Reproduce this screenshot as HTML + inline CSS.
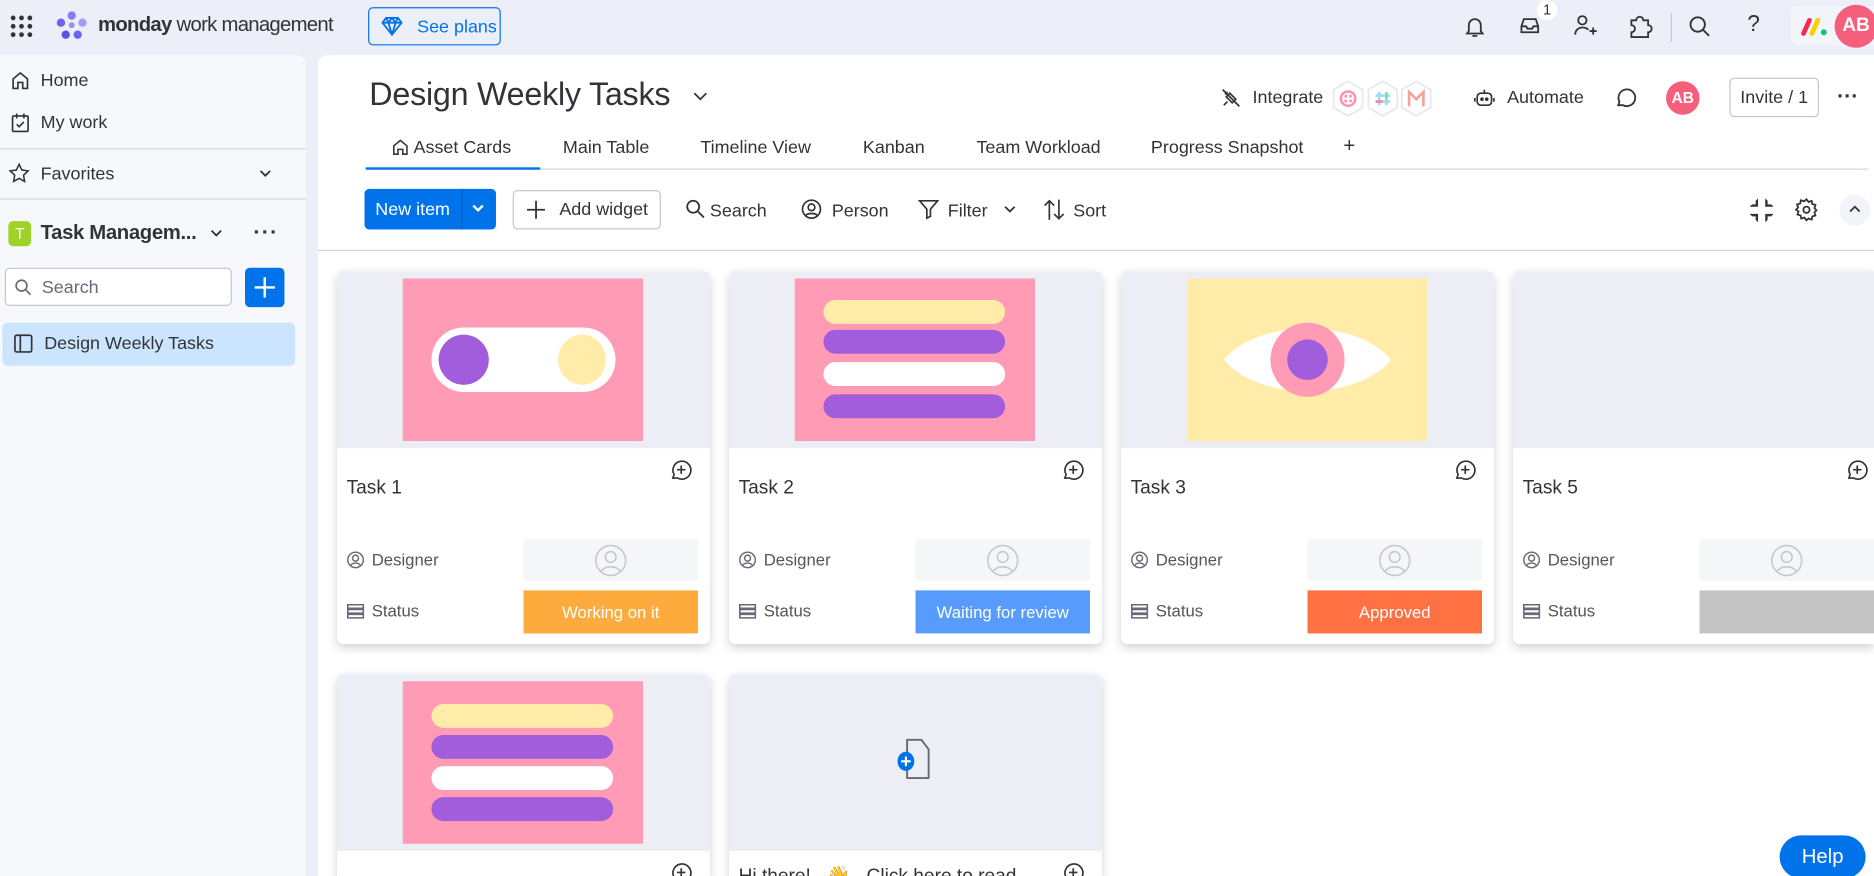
<!DOCTYPE html>
<html><head><meta charset="utf-8">
<style>
*{box-sizing:border-box;margin:0;padding:0}
html,body{width:1874px;height:876px;overflow:hidden;background:#eceff8;font-family:"Liberation Sans",sans-serif;color:#323338}
#w{position:absolute;left:0;top:0;width:1568px;height:733px;transform:scale(1.19515);transform-origin:0 0;background:#eceff8;overflow:hidden}
.a{position:absolute}
.t{font-size:14px;white-space:nowrap}
.card{position:absolute;width:312px;height:312px;background:#fff;border-radius:6px;box-shadow:0 3px 8px rgba(0,0,0,.18);overflow:hidden}
.img{position:absolute;left:0;top:0;width:312px;height:148px;background:#ecedf5}
.pink{position:absolute;left:55px;top:6px;width:201px;height:136px;background:#ff9bb4}
.bar{position:absolute;left:24px;width:152px;height:20px;border-radius:10px}
.cm{position:absolute;left:278px;top:156px}
.title{position:absolute;left:8px;top:173px;font-size:16px}
.lbl{position:absolute;left:8px;font-size:14px;color:#555;display:flex;align-items:center;gap:6px}
.box{position:absolute;left:156px;width:146px}
.st{color:#fff;font-size:14px;display:flex;align-items:center;justify-content:center}
</style></head><body><div id="w">

<svg class="a" style="left:8px;top:12px" width="20" height="20" viewBox="0 0 20 20" fill="#323338"><circle cx="3" cy="3" r="2"/><circle cx="10" cy="3" r="2"/><circle cx="17" cy="3" r="2"/><circle cx="3" cy="10" r="2"/><circle cx="10" cy="10" r="2"/><circle cx="17" cy="10" r="2"/><circle cx="3" cy="17" r="2"/><circle cx="10" cy="17" r="2"/><circle cx="17" cy="17" r="2"/></svg>
<svg class="a" style="left:46px;top:8px" width="28" height="28" viewBox="0 0 28 28"><circle cx="14" cy="5" r="3.5" fill="#8a7cf0"/><circle cx="5" cy="11" r="3.5" fill="#6e63ee"/><circle cx="23" cy="11" r="3.5" fill="#a79cf5"/><circle cx="9" cy="21" r="3.5" fill="#5b52e8"/><circle cx="19" cy="21" r="3.5" fill="#6e63ee"/><circle cx="14" cy="13" r="2.5" fill="#9a90f2"/></svg>
<div class="a" style="left:82px;top:11px;font-size:17px;letter-spacing:-.6px"><b>monday</b> work management</div>
<div class="a" style="left:308px;top:6px;width:111px;height:32px;border:1px solid #0073ea;border-radius:4px;color:#0073ea;font-size:15px;display:flex;align-items:center;padding-left:10px;gap:12px;background:#eceff8">
<svg width="18" height="16" viewBox="0 0 18 16" fill="none" stroke="#0073ea" stroke-width="1.5"><path d="M4 1h10l3 4-8 10L1 5z M1 5h16 M6 5l3 10 3-10 M4 1l2 4 3-4 3 4 2-4"/></svg>See plans</div>
<svg class="a" style="left:1224px;top:12px" width="20" height="20" viewBox="0 0 20 20" fill="none" stroke="#323338" stroke-width="1.5"><path d="M5 14V9a5 5 0 0110 0v5l1.5 2h-13z M8 18h4"/></svg>
<svg class="a" style="left:1270px;top:12px" width="20" height="20" viewBox="0 0 20 20" fill="none" stroke="#323338" stroke-width="1.5"><path d="M3 10l2-6h10l2 6v5H3z M3 10h4l1 2h4l1-2h4"/></svg>
<div class="a" style="left:1286px;top:0;width:17px;height:17px;border-radius:50%;background:#fff;font-size:12px;text-align:center;line-height:17px">1</div>
<svg class="a" style="left:1315px;top:11px" width="22" height="22" viewBox="0 0 22 22" fill="none" stroke="#323338" stroke-width="1.5"><circle cx="9" cy="6" r="3.5"/><path d="M3 18c0-4 3-6 6-6s4 1 5 2 M15 15h6 M18 12v6"/></svg>
<svg class="a" style="left:1361px;top:11px" width="22" height="22" viewBox="0 0 22 22" fill="none" stroke="#323338" stroke-width="1.5"><path d="M4 6h4a3 3 0 016 0h4v4a3 3 0 010 6v4H4v-4a3 3 0 000-6z"/></svg>
<div class="a" style="left:1398px;top:11px;width:1px;height:24px;background:#c3c6d4"></div>
<svg class="a" style="left:1412px;top:12px" width="20" height="20" viewBox="0 0 20 20" fill="none" stroke="#323338" stroke-width="1.6"><circle cx="8.5" cy="8.5" r="6"/><path d="M13 13l5 5"/></svg>
<div class="a" style="left:1462px;top:10px;font-size:19px">?</div>
<div class="a" style="left:1499px;top:5px;width:69px;height:33px;background:#f3f5fb;border-radius:4px 0 0 4px"></div>
<svg class="a" style="left:1506px;top:13px" width="24" height="18" viewBox="0 0 24 18"><path d="M3 15l5-11" stroke="#f62b54" stroke-width="4" stroke-linecap="round"/><path d="M10 15l5-11" stroke="#ffcc00" stroke-width="4" stroke-linecap="round"/><circle cx="20" cy="14" r="2.5" fill="#00ca72"/></svg>
<div class="a" style="left:1535px;top:4px;width:36px;height:36px;border-radius:50%;background:#f65f7c;color:#fff;font-weight:bold;font-size:16px;text-align:center;line-height:36px">AB</div>

<div class="a" style="left:0;top:46px;width:256px;height:687px;background:#f7f8fc;border-radius:0 8px 0 0"></div>
<svg class="a" style="left:9px;top:59px" width="16" height="16" viewBox="0 0 16 16" fill="none" stroke="#323338" stroke-width="1.4"><path d="M2 7l6-5 6 5v8h-4v-5H6v5H2z"/></svg>
<div class="a t" style="left:34px;top:59px;font-size:15px">Home</div>
<svg class="a" style="left:9px;top:94px" width="16" height="17" viewBox="0 0 16 17" fill="none" stroke="#323338" stroke-width="1.4"><rect x="1.5" y="3" width="13" height="13" rx="1"/><path d="M5 1v4 M11 1v4 M5 10l2 2 4-4"/></svg>
<div class="a t" style="left:34px;top:94px;font-size:15px">My work</div>
<div class="a" style="left:0;top:124px;width:256px;height:1px;background:#d0d4e4"></div>
<svg class="a" style="left:7px;top:136px" width="18" height="18" viewBox="0 0 18 18" fill="none" stroke="#323338" stroke-width="1.3"><path d="M9 1.5l2.3 4.8 5.2.7-3.8 3.6.9 5.2L9 13.3 4.4 15.8l.9-5.2L1.5 7l5.2-.7z"/></svg>
<div class="a t" style="left:34px;top:137px;font-size:15px">Favorites</div>
<svg class="a" style="left:216px;top:140px" width="12" height="10" viewBox="0 0 12 10" fill="none" stroke="#323338" stroke-width="1.5"><path d="M2 3l4 4 4-4"/></svg>
<div class="a" style="left:0;top:166px;width:256px;height:1px;background:#d0d4e4"></div>
<div class="a" style="left:7px;top:185px;width:19px;height:21px;border-radius:4px;background:#9cd326;color:#fff;font-size:13px;text-align:center;line-height:21px">T</div>
<div class="a t" style="left:34px;top:185px;font-size:17px;font-weight:bold;letter-spacing:-.3px">Task Managem...</div>
<svg class="a" style="left:175px;top:190px" width="12" height="10" viewBox="0 0 12 10" fill="none" stroke="#323338" stroke-width="1.5"><path d="M2 3l4 4 4-4"/></svg>
<div class="a" style="left:212px;top:184px;font-size:18px;font-weight:bold;letter-spacing:1px">···</div>
<div class="a" style="left:4px;top:224px;width:190px;height:32px;border:1px solid #c3c6d4;border-radius:4px;background:#fff"></div>
<svg class="a" style="left:12px;top:233px" width="15" height="15" viewBox="0 0 15 15" fill="none" stroke="#676879" stroke-width="1.4"><circle cx="6" cy="6" r="4.5"/><path d="M9.5 9.5l4 4"/></svg>
<div class="a t" style="left:35px;top:232px;color:#676879;font-size:15px">Search</div>
<div class="a" style="left:205px;top:224px;width:33px;height:33px;border-radius:4px;background:#0073ea"></div>
<svg class="a" style="left:211px;top:230px" width="21" height="21" viewBox="0 0 21 21" stroke="#fff" stroke-width="2"><path d="M10.5 2v17 M2 10.5h17"/></svg>
<div class="a" style="left:2px;top:270px;width:245px;height:36px;border-radius:4px;background:#cce5ff"></div>
<svg class="a" style="left:11px;top:279px" width="17" height="17" viewBox="0 0 17 17" fill="none" stroke="#323338" stroke-width="1.4"><rect x="1.5" y="1.5" width="14" height="14" rx="1.5"/><path d="M6 1.5v14"/></svg>
<div class="a t" style="left:37px;top:279px;font-size:15px">Design Weekly Tasks</div>

<div class="a" style="left:266px;top:46px;width:1302px;height:687px;background:#fff;border-radius:8px 0 0 0"></div>
<div class="a t" style="left:309px;top:64px;font-size:27px;letter-spacing:-.2px">Design Weekly Tasks</div>
<svg class="a" style="left:579px;top:76px" width="14" height="10" viewBox="0 0 14 10" fill="none" stroke="#323338" stroke-width="1.5"><path d="M2 2l5 5 5-5"/></svg>
<svg class="a" style="left:1021px;top:73px" width="18" height="18" viewBox="0 0 18 18" fill="none" stroke="#323338" stroke-width="1.4"><path d="M2 2l14 14 M6 4l-2 2 M5 8l5 5 3-3-5-5z M12 12l4 4 M3 15l3-3"/></svg>
<div class="a t" style="left:1048px;top:73px;font-size:15px">Integrate</div>
<svg class="a" style="left:1113px;top:66px" width="90" height="34" viewBox="0 0 90 34"><g fill="#fff" stroke="#e6e9f2" stroke-width="1.5"><path d="M15 2l12 7v15l-12 7-12-7V9z"/><path d="M44 2l12 7v15l-12 7-12-7V9z"/><path d="M72 2l12 7v15l-12 7-12-7V9z"/></g><circle cx="15" cy="16.5" r="6" fill="none" stroke="#ff8fa6" stroke-width="2"/><circle cx="13" cy="14.5" r="1.2" fill="#ff8fa6"/><circle cx="17" cy="14.5" r="1.2" fill="#ff8fa6"/><circle cx="13" cy="18.5" r="1.2" fill="#ff8fa6"/><circle cx="17" cy="18.5" r="1.2" fill="#ff8fa6"/><path d="M41 11v11 M47 11v11 M38 14h12 M38 19h12" stroke-width="2.2" stroke="#9adcf5"/><path d="M47 11v6" stroke="#8fd6b4" stroke-width="2.2"/><path d="M38 19h6" stroke="#f08aa8" stroke-width="2.2"/><path d="M66 23V11l6 6 6-6v12" fill="none" stroke="#f2a29a" stroke-width="2.2"/></svg>
<svg class="a" style="left:1233px;top:73px" width="18" height="18" viewBox="0 0 18 18" fill="none" stroke="#323338" stroke-width="1.4"><rect x="3" y="5" width="12" height="10" rx="3"/><path d="M9 2v3 M1 9v3 M17 9v3"/><circle cx="7" cy="10" r=".8" fill="#323338"/><circle cx="11" cy="10" r=".8" fill="#323338"/></svg>
<div class="a t" style="left:1261px;top:73px;font-size:15px">Automate</div>
<svg class="a" style="left:1350px;top:72px" width="20" height="20" viewBox="0 0 20 20" fill="none" stroke="#323338" stroke-width="1.5"><path d="M4 16l1-3a7 7 0 113 3z"/></svg>
<div class="a" style="left:1394px;top:68px;width:28px;height:28px;border-radius:50%;background:#f65f7c;color:#fff;font-weight:bold;font-size:13px;text-align:center;line-height:28px">AB</div>
<div class="a" style="left:1447px;top:65px;width:75px;height:33px;border:1px solid #c3c6d4;border-radius:4px;font-size:15px;text-align:center;line-height:31px">Invite / 1</div>
<div class="a" style="left:1537px;top:70px;font-size:18px;font-weight:bold">···</div>

<svg class="a" style="left:328px;top:116px" width="14" height="14" viewBox="0 0 14 14" fill="none" stroke="#323338" stroke-width="1.3"><path d="M1.5 6l5.5-4.5 5.5 4.5v7h-3.5v-4h-4v4h-3.5z"/></svg>
<div class="a t" style="left:346px;top:115px;font-size:15px">Asset Cards</div>
<div class="a t" style="left:471px;top:115px;font-size:15px">Main Table</div>
<div class="a t" style="left:586px;top:115px;font-size:15px">Timeline View</div>
<div class="a t" style="left:722px;top:115px;font-size:15px">Kanban</div>
<div class="a t" style="left:817px;top:115px;font-size:15px">Team Workload</div>
<div class="a t" style="left:963px;top:115px;font-size:15px">Progress Snapshot</div>
<div class="a t" style="left:1124px;top:112px;font-size:17px">+</div>
<div class="a" style="left:306px;top:141px;width:1257px;height:1px;background:#d0d4e4"></div>
<div class="a" style="left:306px;top:140px;width:146px;height:2px;background:#0073ea"></div>

<div class="a" style="left:305px;top:158px;width:110px;height:34px;border-radius:4px;background:#0073ea"></div>
<div class="a t" style="left:314px;top:167px;color:#fff;font-size:15px">New item</div>
<div class="a" style="left:386px;top:158px;width:1px;height:34px;background:#0060c0"></div>
<svg class="a" style="left:394px;top:170px" width="12" height="10" viewBox="0 0 12 10" fill="none" stroke="#fff" stroke-width="2"><path d="M2 2l4 4 4-4"/></svg>
<div class="a" style="left:429px;top:159px;width:124px;height:33px;border:1px solid #c3c6d4;border-radius:4px"></div>
<svg class="a" style="left:440px;top:167px" width="17" height="17" viewBox="0 0 17 17" stroke="#323338" stroke-width="1.5"><path d="M8.5 1v15 M1 8.5h15"/></svg>
<div class="a t" style="left:468px;top:167px;font-size:15px">Add widget</div>
<svg class="a" style="left:573px;top:166px" width="17" height="17" viewBox="0 0 17 17" fill="none" stroke="#323338" stroke-width="1.5"><circle cx="7" cy="7" r="5"/><path d="M11 11l5 5"/></svg>
<div class="a t" style="left:594px;top:168px;font-size:15px">Search</div>
<svg class="a" style="left:670px;top:166px" width="18" height="18" viewBox="0 0 18 18" fill="none" stroke="#323338" stroke-width="1.4"><circle cx="9" cy="9" r="7.5"/><circle cx="9" cy="7.5" r="2.8"/><path d="M4 14.5c1.5-2.5 8.5-2.5 10 0"/></svg>
<div class="a t" style="left:696px;top:168px;font-size:15px">Person</div>
<svg class="a" style="left:768px;top:166px" width="18" height="18" viewBox="0 0 18 18" fill="none" stroke="#323338" stroke-width="1.4"><path d="M1.5 2h15l-6 7v6l-3 1.5V9z"/></svg>
<div class="a t" style="left:793px;top:168px;font-size:15px">Filter</div>
<svg class="a" style="left:839px;top:171px" width="12" height="10" viewBox="0 0 12 10" fill="none" stroke="#323338" stroke-width="1.5"><path d="M2 2l4 4 4-4"/></svg>
<svg class="a" style="left:873px;top:166px" width="18" height="19" viewBox="0 0 18 19" fill="none" stroke="#323338" stroke-width="1.4"><path d="M5 18V2 M1 6l4-4 4 4 M13 1v16 M9 13l4 4 4-4"/></svg>
<div class="a t" style="left:898px;top:168px;font-size:15px">Sort</div>
<svg class="a" style="left:1463px;top:165px" width="22" height="22" viewBox="0 0 22 22" fill="#323338"><path d="M8 1v7H1l2-2 3 0V3zM14 1v7h7l-2-2h-3V3zM8 21v-7H1l2 2h3v3zM14 21v-7h7l-2 2h-3v3z"/></svg>
<svg class="a" style="left:1501px;top:165px" width="21" height="21" viewBox="0 0 24 24" fill="none" stroke="#323338" stroke-width="1.7"><circle cx="12" cy="12" r="3"/><path d="M12 2l2 2.5 3-1 .6 3 3 .9-1 3 2 2.1-2 2 1 3-3 .9-.6 3-3-1L12 22l-2-2.5-3 1-.6-3-3-.9 1-3L2 12l2-2.1-1-3 3-.9.6-3 3 1z"/></svg>
<div class="a" style="left:1539px;top:163px;width:26px;height:26px;border-radius:50%;background:#f3f4f9"></div>
<svg class="a" style="left:1547px;top:171px" width="10" height="8" viewBox="0 0 10 8" fill="none" stroke="#323338" stroke-width="1.5"><path d="M1 6l4-4 4 4"/></svg>
<div class="a" style="left:266px;top:209px;width:1302px;height:1px;background:#d0d4e4"></div>

<div class="card" style="left:282px;top:227px">
 <div class="img"><div class="pink">
  <div class="a" style="left:24px;top:41px;width:154px;height:54px;border-radius:27px;background:#fff"></div>
  <div class="a" style="left:30px;top:47px;width:42px;height:42px;border-radius:50%;background:#a25ddc"></div>
  <div class="a" style="left:130px;top:47px;width:40px;height:42px;border-radius:50%;background:#ffeca8"></div>
 </div></div>
 <svg class="cm" width="20" height="20" viewBox="0 0 20 20" fill="none" stroke="#323338" stroke-width="1.4"><path d="M3 17l1-3a7.5 7.5 0 113 3z M10 6.5v7 M6.5 10h7"/></svg>
 <div class="title">Task 1</div>
 <div class="lbl" style="top:233px"><svg width="15" height="15" viewBox="0 0 15 15" fill="none" stroke="#676879" stroke-width="1.2"><circle cx="7.5" cy="7.5" r="6.5"/><circle cx="7.5" cy="6" r="2.5"/><path d="M3.5 12c1.5-2.5 6.5-2.5 8 0"/></svg>Designer</div>
 <div class="box" style="top:224px;height:35px;background:#f5f6f8"><svg style="position:absolute;left:59px;top:4px" width="28" height="28" viewBox="0 0 28 28" fill="none" stroke="#c3c6d4" stroke-width="1.3"><circle cx="14" cy="14" r="12.5"/><circle cx="14" cy="11" r="4.5"/><path d="M6 23c3-5 13-5 16 0"/></svg></div>
 <div class="lbl" style="top:276px"><svg width="15" height="15" viewBox="0 0 15 15" fill="none" stroke="#676879" stroke-width="1.3"><path d="M1 2h13v3H1zM1 6h13v3H1zM1 10h13v3H1z"/></svg>Status</div>
 <div class="box st" style="top:267px;height:36px;background:#fdab3d">Working on it</div>
</div>

<div class="card" style="left:610px;top:227px">
 <div class="img"><div class="pink">
  <div class="bar" style="top:18px;background:#ffeca8"></div>
  <div class="bar" style="top:43px;background:#a25ddc"></div>
  <div class="bar" style="top:70px;background:#fff"></div>
  <div class="bar" style="top:97px;background:#a25ddc"></div>
 </div></div>
 <svg class="cm" width="20" height="20" viewBox="0 0 20 20" fill="none" stroke="#323338" stroke-width="1.4"><path d="M3 17l1-3a7.5 7.5 0 113 3z M10 6.5v7 M6.5 10h7"/></svg>
 <div class="title">Task 2</div>
 <div class="lbl" style="top:233px"><svg width="15" height="15" viewBox="0 0 15 15" fill="none" stroke="#676879" stroke-width="1.2"><circle cx="7.5" cy="7.5" r="6.5"/><circle cx="7.5" cy="6" r="2.5"/><path d="M3.5 12c1.5-2.5 6.5-2.5 8 0"/></svg>Designer</div>
 <div class="box" style="top:224px;height:35px;background:#f5f6f8"><svg style="position:absolute;left:59px;top:4px" width="28" height="28" viewBox="0 0 28 28" fill="none" stroke="#c3c6d4" stroke-width="1.3"><circle cx="14" cy="14" r="12.5"/><circle cx="14" cy="11" r="4.5"/><path d="M6 23c3-5 13-5 16 0"/></svg></div>
 <div class="lbl" style="top:276px"><svg width="15" height="15" viewBox="0 0 15 15" fill="none" stroke="#676879" stroke-width="1.3"><path d="M1 2h13v3H1zM1 6h13v3H1zM1 10h13v3H1z"/></svg>Status</div>
 <div class="box st" style="top:267px;height:36px;background:#579bfc">Waiting for review</div>
</div>

<div class="card" style="left:938px;top:227px">
 <div class="img"><div class="pink" style="background:#ffeca8">
  <svg style="position:absolute;left:30px;top:28px" width="142" height="80" viewBox="0 0 142 80"><path d="M1 40C30 5 112 5 141 40 112 75 30 75 1 40z" fill="#fff"/><circle cx="71" cy="40" r="31" fill="#ff9bb4"/><circle cx="71" cy="40" r="17" fill="#a25ddc"/></svg>
 </div></div>
 <svg class="cm" width="20" height="20" viewBox="0 0 20 20" fill="none" stroke="#323338" stroke-width="1.4"><path d="M3 17l1-3a7.5 7.5 0 113 3z M10 6.5v7 M6.5 10h7"/></svg>
 <div class="title">Task 3</div>
 <div class="lbl" style="top:233px"><svg width="15" height="15" viewBox="0 0 15 15" fill="none" stroke="#676879" stroke-width="1.2"><circle cx="7.5" cy="7.5" r="6.5"/><circle cx="7.5" cy="6" r="2.5"/><path d="M3.5 12c1.5-2.5 6.5-2.5 8 0"/></svg>Designer</div>
 <div class="box" style="top:224px;height:35px;background:#f5f6f8"><svg style="position:absolute;left:59px;top:4px" width="28" height="28" viewBox="0 0 28 28" fill="none" stroke="#c3c6d4" stroke-width="1.3"><circle cx="14" cy="14" r="12.5"/><circle cx="14" cy="11" r="4.5"/><path d="M6 23c3-5 13-5 16 0"/></svg></div>
 <div class="lbl" style="top:276px"><svg width="15" height="15" viewBox="0 0 15 15" fill="none" stroke="#676879" stroke-width="1.3"><path d="M1 2h13v3H1zM1 6h13v3H1zM1 10h13v3H1z"/></svg>Status</div>
 <div class="box st" style="top:267px;height:36px;background:#ff7043">Approved</div>
</div>

<div class="card" style="left:1266px;top:227px;width:302px;border-radius:6px 0 0 6px">
 <div class="img"></div>
 <svg class="cm" width="20" height="20" viewBox="0 0 20 20" fill="none" stroke="#323338" stroke-width="1.4"><path d="M3 17l1-3a7.5 7.5 0 113 3z M10 6.5v7 M6.5 10h7"/></svg>
 <div class="title">Task 5</div>
 <div class="lbl" style="top:233px"><svg width="15" height="15" viewBox="0 0 15 15" fill="none" stroke="#676879" stroke-width="1.2"><circle cx="7.5" cy="7.5" r="6.5"/><circle cx="7.5" cy="6" r="2.5"/><path d="M3.5 12c1.5-2.5 6.5-2.5 8 0"/></svg>Designer</div>
 <div class="box" style="top:224px;height:35px;background:#f5f6f8"><svg style="position:absolute;left:59px;top:4px" width="28" height="28" viewBox="0 0 28 28" fill="none" stroke="#c3c6d4" stroke-width="1.3"><circle cx="14" cy="14" r="12.5"/><circle cx="14" cy="11" r="4.5"/><path d="M6 23c3-5 13-5 16 0"/></svg></div>
 <div class="lbl" style="top:276px"><svg width="15" height="15" viewBox="0 0 15 15" fill="none" stroke="#676879" stroke-width="1.3"><path d="M1 2h13v3H1zM1 6h13v3H1zM1 10h13v3H1z"/></svg>Status</div>
 <div class="box st" style="top:267px;height:36px;background:#c4c4c4"></div>
</div>

<div class="card" style="left:282px;top:564px;height:169px;border-radius:6px 6px 0 0">
 <div class="img"><div class="pink">
  <div class="bar" style="top:19px;background:#ffeca8"></div>
  <div class="bar" style="top:45px;background:#a25ddc"></div>
  <div class="bar" style="top:71px;background:#fff"></div>
  <div class="bar" style="top:97px;background:#a25ddc"></div>
 </div></div>
 <svg class="cm" width="20" height="20" viewBox="0 0 20 20" fill="none" stroke="#323338" stroke-width="1.4"><path d="M3 17l1-3a7.5 7.5 0 113 3z M10 6.5v7 M6.5 10h7"/></svg>
</div>
<div class="card" style="left:610px;top:564px;height:169px;border-radius:6px 6px 0 0">
 <div class="img">
  <svg style="position:absolute;left:136px;top:52px" width="36" height="38" viewBox="0 0 36 38"><path d="M13 3h12l6 8v24H13z" fill="none" stroke="#676879" stroke-width="1.6" stroke-linejoin="round"/><ellipse cx="12" cy="21" rx="7" ry="8" fill="#0073ea"/><path d="M12 17v8 M8 21h8" stroke="#fff" stroke-width="1.8"/></svg>
 </div>
 <svg class="cm" width="20" height="20" viewBox="0 0 20 20" fill="none" stroke="#323338" stroke-width="1.4"><path d="M3 17l1-3a7.5 7.5 0 113 3z M10 6.5v7 M6.5 10h7"/></svg>
 <div class="title" style="top:159px">Hi there!&nbsp;&nbsp;&nbsp;👋&nbsp;&nbsp;&nbsp;Click here to read</div>
</div>

<div class="a" style="left:1489px;top:699px;width:72px;height:36px;border-radius:18px;background:#0073ea;color:#fff;font-size:17px;text-align:center;line-height:36px">Help</div>
</div></body></html>
